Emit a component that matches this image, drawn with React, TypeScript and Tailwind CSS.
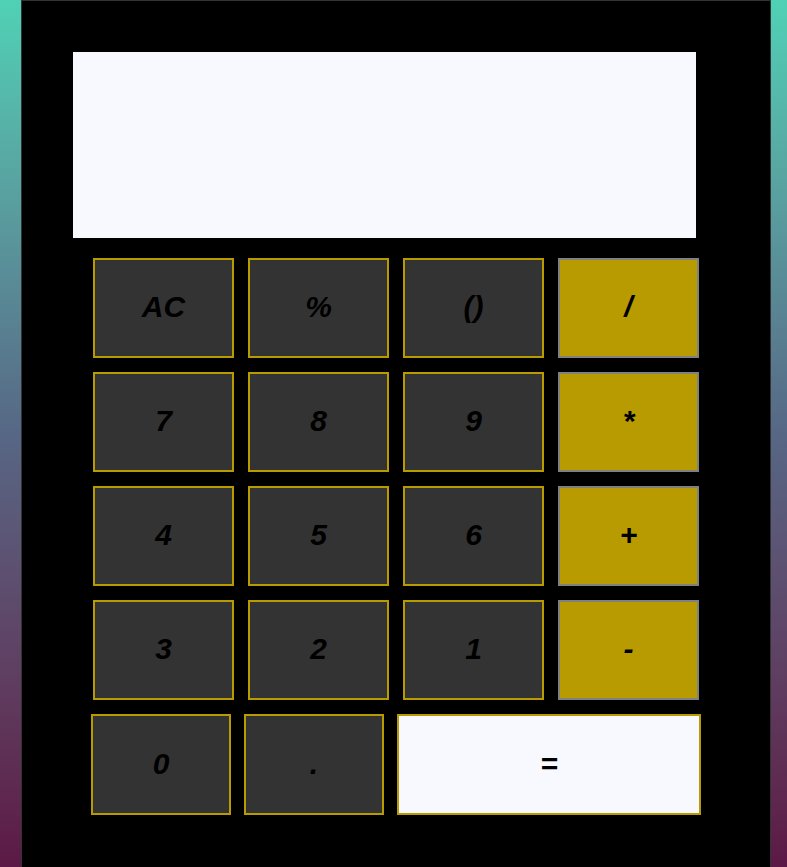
import React from "react";

const digitBtn =
  "flex items-center justify-center pb-[3px] bg-[#333333] border-2 border-[#b89b00] text-black text-[30px] font-bold italic";
const opBtn =
  "flex items-center justify-center pb-[3px] bg-[#b89b00] border-2 border-[#808080] text-black text-[30px] font-bold italic";

const rows: { label: string; op?: boolean }[][] = [
  [{ label: "AC" }, { label: "%" }, { label: "()" }, { label: "/", op: true }],
  [{ label: "7" }, { label: "8" }, { label: "9" }, { label: "*", op: true }],
  [{ label: "4" }, { label: "5" }, { label: "6" }, { label: "+", op: true }],
  [{ label: "3" }, { label: "2" }, { label: "1" }, { label: "-", op: true }],
];

const App: React.FC = () => {
  return (
    <div
      className="min-h-screen w-full bg-gradient-to-b from-[#4fd1b5] via-[#566785] to-[#5c1846]"
      style={{ fontFamily: '"Liberation Sans", Arial, sans-serif' }}
    >
      <div className="ml-[21px] w-[750px] min-h-[867px] bg-black border border-[#333333] border-b-0 pt-[51px]">
        <div className="ml-[51px] w-[623px] h-[186px] bg-[#f8f9ff]" />

        <div className="mt-[20px] ml-[71px] flex flex-col gap-[14px]">
          {rows.map((row, i) => (
            <div key={i} className="flex gap-[14px]">
              {row.map((b) => (
                <button
                  key={b.label}
                  className={`w-[141px] h-[100px] ${b.op ? opBtn : digitBtn}`}
                >
                  {b.label}
                </button>
              ))}
            </div>
          ))}
        </div>

        <div className="mt-[14px] ml-[69px] flex gap-[13px]">
          <button className={`w-[140px] h-[101px] ${digitBtn}`}>0</button>
          <button className={`w-[140px] h-[101px] ${digitBtn}`}>.</button>
          <button className="w-[304px] h-[101px] flex items-center justify-center pb-[3px] bg-[#f8f9ff] border-2 border-[#b89b00] text-black text-[30px] font-bold italic">
            =
          </button>
        </div>
      </div>
    </div>
  );
};

export default App;
